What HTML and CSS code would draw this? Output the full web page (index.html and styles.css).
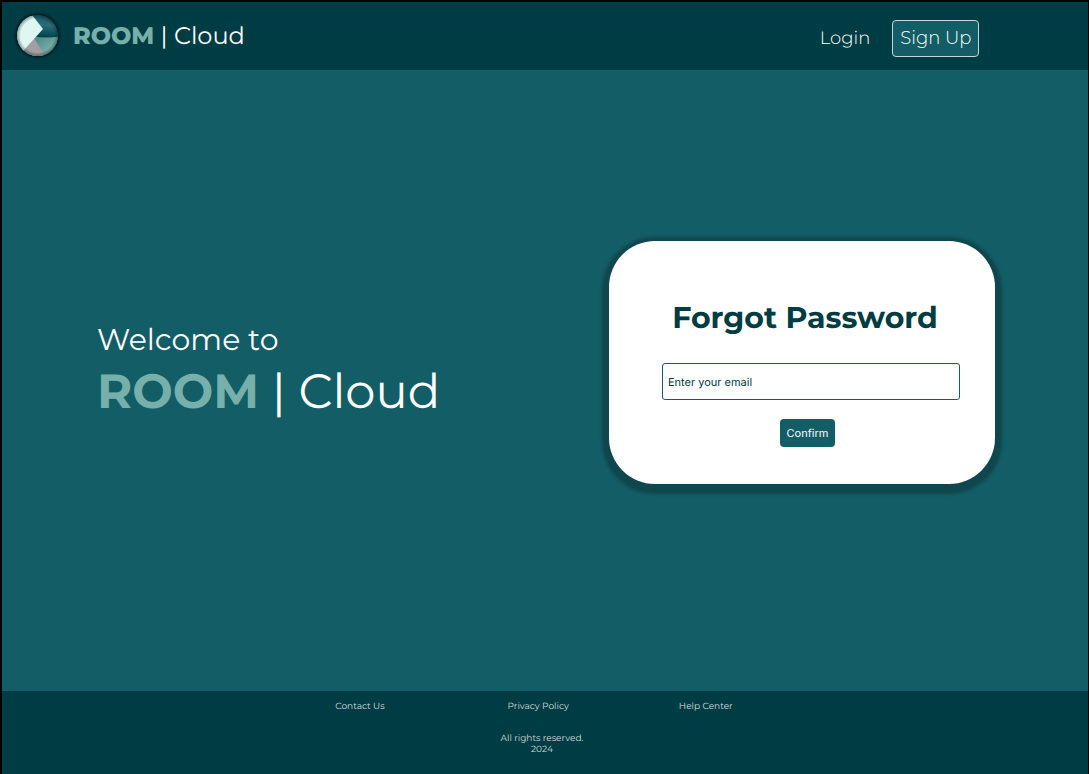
FILE: index.html
```html
<!DOCTYPE html>
<html lang="en">
<head>
<meta charset="utf-8">
<meta name="viewport" content="width=device-width, initial-scale=1">
<title>ROOM | Cloud - Forgot Password</title>
<link rel="stylesheet" href="styles.css">
</head>
<body>
<header class="topbar">
  <a class="brand" href="#">
    <svg class="logo" viewBox="0 0 50 50" aria-hidden="true">
      <defs>
        <clipPath id="disc"><circle cx="25.5" cy="24.5" r="20.5"/></clipPath>
        <filter id="soft" x="-20%" y="-20%" width="140%" height="140%"><feGaussianBlur stdDeviation="1"/></filter>
        <linearGradient id="deep" gradientUnits="userSpaceOnUse" x1="36" y1="6" x2="34" y2="26"><stop offset="0" stop-color="#1b5963"/><stop offset=".4" stop-color="#2a6e79"/><stop offset="1" stop-color="#00434b"/></linearGradient>
        <linearGradient id="mist" gradientUnits="userSpaceOnUse" x1="28" y1="26" x2="40" y2="42"><stop offset="0" stop-color="#528d8b"/><stop offset="1" stop-color="#82b5b0"/></linearGradient>
        <radialGradient id="shade"><stop offset=".82" stop-color="#001a1e" stop-opacity="0"/><stop offset="1" stop-color="#001a1e" stop-opacity=".4"/></radialGradient>
      </defs>
      <circle cx="25.5" cy="24.5" r="22" fill="#00191d" filter="url(#soft)"/>
      <g clip-path="url(#disc)">
        <rect width="50" height="50" fill="url(#deep)"/>
        <path d="M20 25Q36 28 50 25V50H20Z" fill="url(#mist)"/>
        <path d="M22 27L36 50H5L10 38Z" fill="#a29fa3"/>
        <path d="M0 0H17L31 18L12 39L0 50Z" fill="#def7f0"/>
        <circle cx="25.5" cy="24.5" r="20.5" fill="url(#shade)"/>
      </g>
    </svg>
    <span><b class="room">ROOM</b> | Cloud</span>
  </a>
  <nav class="actions">
    <a class="login" href="#">Login</a>
    <button class="signup" type="button">Sign Up</button>
  </nav>
</header>
<main class="content">
  <section class="welcome">
    <p class="greeting">Welcome to</p>
    <h1 class="title"><b class="room">ROOM</b> | Cloud</h1>
  </section>
  <form class="card">
    <h2 class="heading">Forgot Password</h2>
    <input class="email" type="email" placeholder="Enter your email" aria-label="Email">
    <button class="confirm" type="button">Confirm</button>
  </form>
</main>
<footer class="footer">
  <nav class="links">
    <a class="contact" href="#">Contact Us</a>
    <a href="#">Privacy Policy</a>
    <a href="#">Help Center</a>
  </nav>
  <p class="rights">All rights reserved.<br>2024</p>
</footer>
</body>
</html>
```
FILE: styles.css
```css
* { box-sizing: border-box; }
body {
  margin: 0;
  min-height: 100vh;
  display: grid;
  grid-template-rows: auto 1fr auto;
  border: solid #000;
  border-width: 2px 1px 0 2px;
  background: #135d66;
  color: #fff;
  font-family: Montserrat, Inter, "Open Sans", sans-serif;
  font-weight: 400;
  text-rendering: geometricPrecision;
}
a { color: inherit; text-decoration: none; }
h1, h2, p { margin: 0; }
.topbar {
  display: flex;
  align-items: center;
  justify-content: space-between;
  height: 68px;
  padding: 0 10% 0 10px;
  background: #003c43;
}
.brand { display: flex; align-items: center; gap: 11px; font-size: 24px; }
.logo { width: 50px; height: 50px; }
.room { font-weight: 800; color: #77b0aa; }
.title .room { font-weight: 700; }
.actions { display: flex; align-items: center; gap: 22px; margin-top: 4px; font-size: 18px; font-weight: 300; }
.signup {
  height: 37px;
  padding: 0 7px;
  border: 1px solid #c5d8d8;
  border-radius: 4px;
  background: #135d66;
  color: #fff;
  font: inherit;
}
.content {
  display: flex;
  align-items: center;
  justify-content: space-between;
  padding: 0 93px 36px 95px;
}
.welcome { padding-top: 18px; }
.greeting { font-size: 30px; line-height: 40px; }
.title { font-size: 48px; line-height: 64px; font-weight: 400; }
.card {
  display: flex;
  flex-direction: column;
  align-items: center;
  width: 386px;
  padding: 57px 35px 37px 53px;
  border-radius: 46px;
  background: #fff;
  box-shadow: 0 3px 3px 7px #10474e;
}
.heading { margin-right: 12px; color: #003c43; font-size: 30px; line-height: 40px; font-weight: 700; white-space: nowrap; }
.email {
  width: 100%;
  height: 37px;
  margin: 25px 0 19px;
  padding: 0 5px;
  border: 1px solid #135d66;
  border-radius: 3px;
  background: #fff;
  color: #003c43;
  font: 400 11px Inter, sans-serif;
  text-rendering: geometricPrecision;
}
.email::placeholder { color: #003c43; opacity: 1; }
.confirm {
  height: 28px;
  margin-right: 7px;
  padding: 0 7px;
  border: 0;
  border-radius: 4px;
  background: #135d66;
  color: #fff;
  font: 400 11px Inter, sans-serif;
  text-rendering: geometricPrecision;
}
.footer {
  padding: 10px 0 19px;
  background: #003c43;
  color: #d0dddd;
  font-size: 9px;
  line-height: 11px;
  text-align: center;
}
.links { display: flex; justify-content: center; gap: 110px; margin-right: 22px; }
.contact { margin-right: 13px; }
.rights { margin-top: 21px; margin-right: 6px; }
```
